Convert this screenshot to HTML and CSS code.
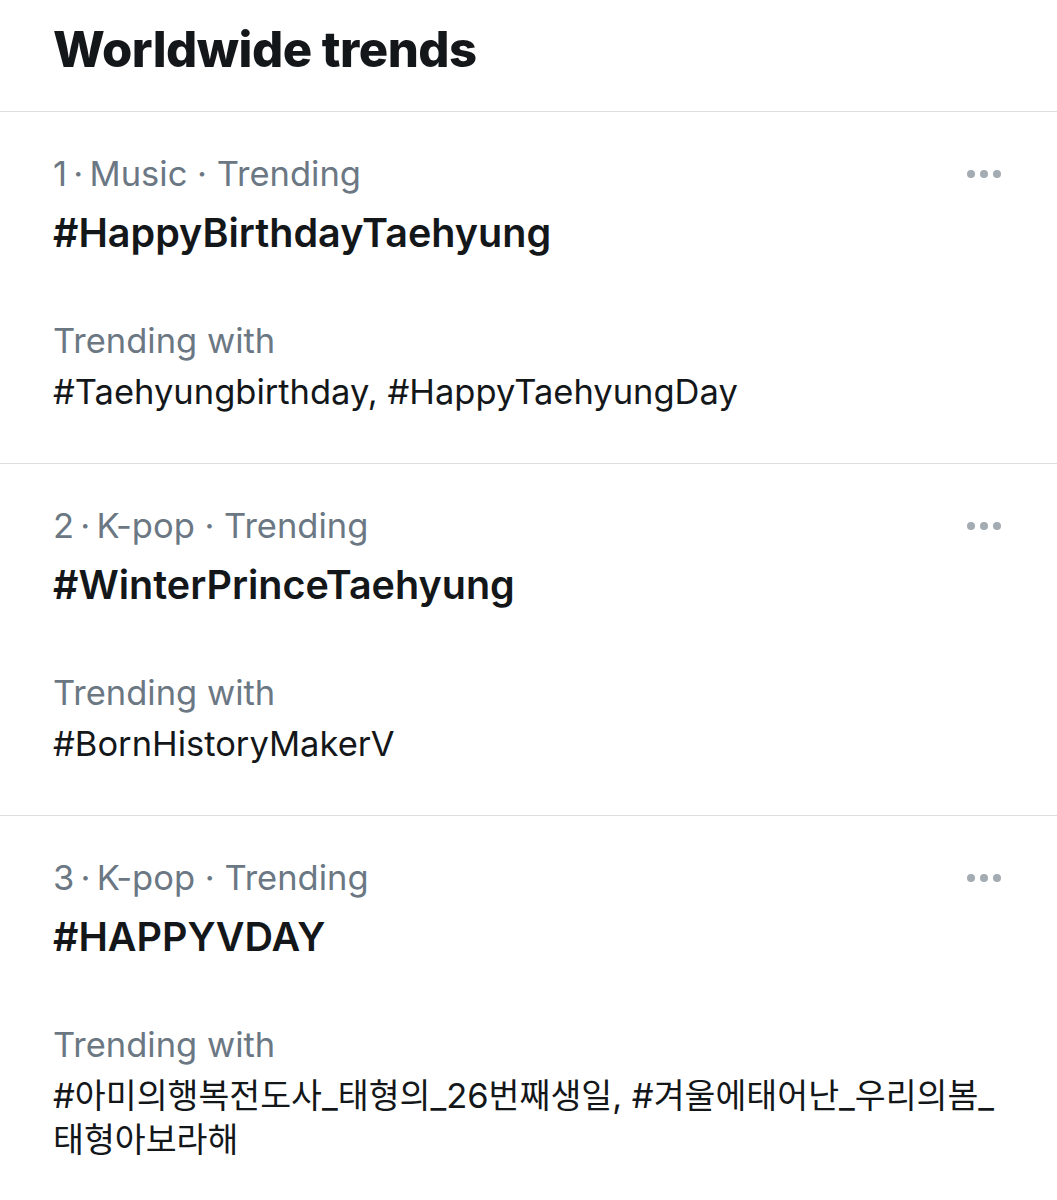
FILE: index.html
```html
<!DOCTYPE html>
<html lang="en">
<head>
  <meta charset="UTF-8">
  <title>Worldwide trends</title>
  <link rel="stylesheet" href="styles.css">
</head>
<body>
  <div class="header">
    <h1>Worldwide trends</h1>
  </div>

  <div class="trend">
    <div class="meta">
      <span>1&thinsp;·&thinsp;Music · Trending</span>
      <span class="more"><i></i><i></i><i></i></span>
    </div>
    <div class="tag">#HappyBirthdayTaehyung</div>
    <div class="with">Trending with</div>
    <div class="related">#Taehyungbirthday, #HappyTaehyungDay</div>
  </div>

  <div class="trend">
    <div class="meta">
      <span>2&thinsp;·&thinsp;K-pop · Trending</span>
      <span class="more"><i></i><i></i><i></i></span>
    </div>
    <div class="tag">#WinterPrinceTaehyung</div>
    <div class="with">Trending with</div>
    <div class="related">#BornHistoryMakerV</div>
  </div>

  <div class="trend last">
    <div class="meta">
      <span>3&thinsp;·&thinsp;K-pop · Trending</span>
      <span class="more"><i></i><i></i><i></i></span>
    </div>
    <div class="tag">#HAPPYVDAY</div>
    <div class="with">Trending with</div>
    <div class="related korean">#<span class="ko">아미의행복전도사</span>_<span class="ko">태형의</span>_26<span class="ko">번째생일</span>, #<span class="ko">겨울에태어난</span>_<span class="ko">우리의봄</span>_<br><span class="ko">태형아보라해</span></div>
  </div>
</body>
</html>
```

FILE: styles.css
```css
body {
  margin: 0;
  background-color: #fff;
  color: #14171a;
  font-family: Inter, "Liberation Sans", "Noto Sans CJK KR", sans-serif;
}
.header {
  padding: 20px 53px 0;
  height: 91px;
  border-bottom: 1px solid #dedede;
}
h1 {
  margin: 0;
  font-size: 49px;
  font-weight: 800;
  line-height: 60px;
  letter-spacing: -0.5px;
}
.trend {
  padding: 40px 56px 46px 53px;
  border-bottom: 1px solid #dedede;
}
.trend.last {
  border-bottom: none;
}
.meta {
  display: flex;
  justify-content: space-between;
  align-items: center;
  font-size: 34.5px;
  line-height: 44px;
  color: #6b7884;
}
.more {
  display: flex;
  gap: 5px;
}
.more i {
  width: 8px;
  height: 8px;
  border-radius: 50%;
  background-color: #a3abb3;
}
.tag {
  margin-top: 12px;
  font-size: 39.5px;
  font-weight: 600;
  line-height: 50px;
}
.with {
  margin-top: 57px;
  font-size: 34.5px;
  line-height: 51px;
  color: #6b7884;
}
.related {
  font-size: 34.5px;
  line-height: 51px;
}
.korean {
  line-height: 42px;
  margin-top: 3px;
}
.ko {
  font-family: "Noto Sans CJK KR", sans-serif;
  font-size: 33.6px;
}
```
